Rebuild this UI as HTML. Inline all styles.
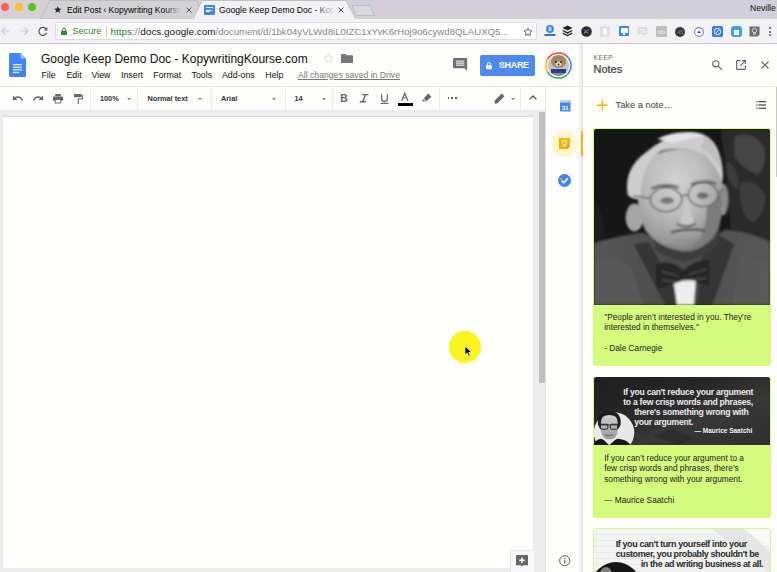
<!DOCTYPE html>
<html><head><meta charset="utf-8">
<style>
*{box-sizing:border-box;margin:0;padding:0}
html,body{width:777px;height:572px;overflow:hidden;background:#fdfdfc;font-family:"Liberation Sans",sans-serif;color:#222}
.a{position:absolute}
.t{position:absolute;white-space:nowrap;line-height:1}
svg{position:absolute;overflow:visible}
</style></head><body>

<!-- ===== TAB BAR ===== -->
<div class="a" style="left:0;top:0;width:777px;height:19px;background:linear-gradient(90deg,#d8cfd3 0%,#d3cfd8 40%,#d2d0da 100%)"></div>
<div class="a" style="left:1.2px;top:3.3px;width:8px;height:8px;border-radius:50%;background:#f6625b"></div>
<div class="a" style="left:14.8px;top:3.3px;width:8px;height:8px;border-radius:50%;background:#f8c12d"></div>
<div class="a" style="left:28.2px;top:3.3px;width:8px;height:8px;border-radius:50%;background:#50c725"></div>
<!-- tab 1 -->
<svg style="left:0;top:0" width="777" height="19"><polygon points="40.5,19 50,0.5 197,0.5 203,19" fill="#d2d2d4" stroke="#b8b8bc" stroke-width="0.8"/></svg>
<svg style="left:53.5px;top:6.2px" width="7.5" height="7.2" viewBox="0 0 24 23"><path d="M12 0.5l3.4 7.4 8.1.8-6.1 5.4 1.8 7.9L12 17.9l-7.2 4.1 1.8-7.9L0.5 8.7l8.1-.8z" fill="#2a2a2a"/></svg>
<div class="t" style="left:67px;top:6px;font-size:8.5px;color:#000;width:114px;overflow:hidden">Edit Post ‹ Kopywriting Kourse</div>
<div class="a" style="left:164px;top:3px;width:17px;height:14px;background:linear-gradient(90deg,rgba(210,210,212,0),#d2d2d4)"></div>
<svg style="left:186px;top:7px" width="6" height="6" viewBox="0 0 6 6"><path d="M0.5 0.5L5.5 5.5M5.5 0.5L0.5 5.5" stroke="#555" stroke-width="1"/></svg>
<!-- tab 2 -->
<svg style="left:0;top:0" width="777" height="20"><polygon points="193,19.5 202,0.5 346,0.5 356,19.5" fill="#f2f2f4" stroke="#b8b8bc" stroke-width="0.8"/><rect x="192" y="18.6" width="166" height="2" fill="#f2f2f4"/></svg>
<div class="a" style="left:204px;top:4.5px;width:11px;height:10px;background:#4285f4;border-radius:1px"></div>
<div class="a" style="left:206.3px;top:7px;width:6.5px;height:1.3px;background:#fff"></div>
<div class="a" style="left:206.3px;top:10.3px;width:3.8px;height:1.3px;background:#fff"></div>
<div class="a" style="left:210.1px;top:10.3px;width:2.7px;height:0.8px;background:#b8d0f8"></div>
<div class="t" style="left:219px;top:6px;font-size:8.6px;color:#000;width:116px;overflow:hidden">Google Keep Demo Doc - Kopy</div>
<div class="a" style="left:314px;top:3px;width:21px;height:14px;background:linear-gradient(90deg,rgba(242,242,244,0),#f2f2f4)"></div>
<svg style="left:338px;top:7px" width="6" height="6" viewBox="0 0 6 6"><path d="M0.5 0.5L5.5 5.5M5.5 0.5L0.5 5.5" stroke="#555" stroke-width="1"/></svg>
<!-- new tab -->
<svg style="left:0;top:0" width="777" height="19"><polygon points="352,5.5 370,5.5 374.5,15.5 356.5,15.5" fill="#d9d9dc" stroke="#b5b5b8" stroke-width="0.7"/></svg>
<div class="t" style="left:750px;top:4px;font-size:8.6px;color:#111">Neville</div>

<!-- ===== TOOLBAR ===== -->
<div class="a" style="left:0;top:19px;width:777px;height:24.5px;background:#f2f2f4;border-bottom:1px solid #c2c2c4"></div>
<svg style="left:1px;top:27px" width="9" height="8" viewBox="0 0 9 8"><path d="M8.5 4H1M4.5 0.5L1 4l3.5 3.5" stroke="#c9c9cb" stroke-width="1.1" fill="none"/></svg>
<svg style="left:20px;top:27px" width="9" height="8" viewBox="0 0 9 8"><path d="M0.5 4H8M4.5 0.5L8 4 4.5 7.5" stroke="#c9c9cb" stroke-width="1.1" fill="none"/></svg>
<svg style="left:38px;top:27px" width="10" height="9" viewBox="0 0 10 9"><path d="M8.3 2.2A4 4 0 1 0 8.6 6" stroke="#4a4a4a" stroke-width="1.1" fill="none"/><path d="M9.3 0.3v3.3H6z" fill="#4a4a4a"/></svg>
<div class="a" style="left:55px;top:22px;width:482px;height:18px;background:#fff;border:1px solid #dcdcde;border-radius:2px"></div>
<svg style="left:61px;top:28px" width="6" height="7" viewBox="0 0 6 7"><rect x="0" y="3" width="6" height="4" rx="0.5" fill="#2f8f2f"/><path d="M1.3 3.2V2a1.7 1.7 0 0 1 3.4 0v1.2" stroke="#2f8f2f" stroke-width="1" fill="none"/></svg>
<div class="t" style="left:72.5px;top:27px;font-size:9.1px;color:#2f7f31">Secure</div>
<div class="a" style="left:106px;top:26px;width:1px;height:11px;background:#c8c8c8"></div>
<div class="t" style="left:110.5px;top:26.5px;font-size:9.95px;color:#2f7f31">https:<span style="color:#888">//</span><span style="color:#111">docs.google.com</span><span style="color:#858585;font-size:9.65px">/document/d/1bk04yVLWd8iL0IZC1xYvK6rHoj9o6cywd8QLAUXQ5...</span></div>
<svg style="left:523px;top:26.5px" width="10" height="10" viewBox="0 0 24 24"><path d="M12 2.5l2.8 6.3 6.9.6-5.2 4.6 1.6 6.8L12 17.2l-6.1 3.6 1.6-6.8-5.2-4.6 6.9-.6z" stroke="#555" stroke-width="2" fill="none"/></svg>

<!-- extension icons -->
<svg style="left:544px;top:24px" width="12" height="14" viewBox="0 0 12 14"><circle cx="6" cy="5" r="4" fill="#3d8ee8"/><text x="6" y="7" font-size="5" fill="#fff" text-anchor="middle" font-family="Liberation Sans" font-weight="bold">8</text><rect x="0.5" y="10" width="11" height="2" fill="#3d6cc8"/></svg>
<svg style="left:562px;top:25px" width="11" height="12" viewBox="0 0 11 12"><path d="M5.5 0.5L10.5 3 5.5 5.5 0.5 3z" fill="#222"/><path d="M0.8 5.5l4.7 2.4 4.7-2.4" stroke="#222" stroke-width="1.3" fill="none"/><path d="M0.8 8.2l4.7 2.4 4.7-2.4" stroke="#222" stroke-width="1.3" fill="none"/></svg>
<svg style="left:581px;top:26px" width="11" height="11" viewBox="0 0 11 11"><circle cx="5.5" cy="5.5" r="5.3" fill="#2b2b2b"/><path d="M3 7.5Q5 3 8 3.5" stroke="#e05050" stroke-width="1" fill="none"/><path d="M3.5 7Q6 5 7.5 7" stroke="#40c060" stroke-width="1" fill="none"/><path d="M3 4.5L7 6.5" stroke="#4090ff" stroke-width="0.8"/></svg>
<div class="a" style="left:600px;top:26px;width:10px;height:11px;background:#e2e2e2;border-radius:1px"></div>
<svg style="left:602px;top:27px" width="6" height="9" viewBox="0 0 6 9"><path d="M0.5 1.5L3 0.5 5.5 1.5V8.5H0.5z" fill="#fafafa" stroke="#d0d0d0" stroke-width="0.6"/></svg>
<div class="a" style="left:619px;top:26px;width:10px;height:10px;background:#3f86e8;border-radius:1px"></div>
<div class="a" style="left:620.5px;top:28px;width:7px;height:5px;background:#f4f8ff"></div>
<div class="a" style="left:623px;top:33px;width:2px;height:2px;background:#f4f8ff"></div>
<svg style="left:637px;top:26px" width="11" height="11" viewBox="0 0 11 11"><rect x="0.5" y="1" width="10" height="7" rx="1" fill="#dcdcdc"/><path d="M6 8l2 2.5V8" fill="#dcdcdc"/><text x="5.5" y="6.5" font-size="4.5" fill="#f6f6f6" text-anchor="middle" font-family="Liberation Sans" font-weight="bold">CG</text></svg>
<div class="a" style="left:656px;top:26px;width:10.5px;height:11px;background:#bdbdbd;border-radius:1px"></div>
<div class="t" style="left:657px;top:28.5px;font-size:6px;color:#f4f4f4;font-weight:bold">&lt;/&gt;</div>
<svg style="left:675px;top:26.5px" width="10" height="10" viewBox="0 0 10 10"><circle cx="5" cy="5" r="5" fill="#1f3f4a"/><text x="5" y="7" font-size="5.5" fill="#f05a28" text-anchor="middle" font-family="Liberation Sans">45</text></svg>
<svg style="left:694px;top:26.5px" width="10" height="10" viewBox="0 0 10 10"><circle cx="5" cy="5" r="4.4" fill="#fff" stroke="#9b6ff0" stroke-width="1.1"/><path d="M3.5 6L5 3.6 6.5 6z" fill="#333"/></svg>
<div class="a" style="left:712px;top:26px;width:10.5px;height:11px;background:#3a7de0;border-radius:1.5px"></div>
<svg style="left:713px;top:27px" width="9" height="9" viewBox="0 0 9 9"><circle cx="4.5" cy="4.5" r="3.2" stroke="#fff" stroke-width="0.9" fill="none"/><path d="M3 6L6.5 2.5" stroke="#fff" stroke-width="0.9"/></svg>
<div class="a" style="left:731px;top:26px;width:10.5px;height:11px;background:#3fa0ee;border-radius:3px"></div>
<div class="a" style="left:733.5px;top:30px;width:5px;height:5px;background:#fff"></div>
<svg style="left:749px;top:26px" width="11" height="11" viewBox="0 0 11 11"><path d="M0.5 0.5H10.5V8.5L8.5 10.5H0.5z" fill="#6d6d6d"/><circle cx="5.5" cy="4.5" r="2.2" fill="none" stroke="#eee" stroke-width="0.8"/><path d="M4.6 6.5v1.8h1.8V6.5" stroke="#eee" stroke-width="0.8" fill="none"/></svg>
<div class="a" style="left:769px;top:27px;width:2px;height:2px;border-radius:50%;background:#555"></div>
<div class="a" style="left:769px;top:30.5px;width:2px;height:2px;border-radius:50%;background:#555"></div>
<div class="a" style="left:769px;top:34px;width:2px;height:2px;border-radius:50%;background:#555"></div>

<!-- ===== DOCS HEADER ===== -->
<div class="a" style="left:0;top:44px;width:582px;height:42px;background:#fdfdfc"></div>
<svg style="left:9px;top:53px" width="17" height="24" viewBox="0 0 17 24"><path d="M1.5 0H11.5L17 5.5V22.5A1.5 1.5 0 0 1 15.5 24H1.5A1.5 1.5 0 0 1 0 22.5V1.5A1.5 1.5 0 0 1 1.5 0z" fill="#4285f4"/><path d="M11.5 0V5.5H17z" fill="#a1c2fa"/><rect x="4" y="11" width="9" height="1.2" fill="#f1f1f1"/><rect x="4" y="13.6" width="9" height="1.2" fill="#f1f1f1"/><rect x="4" y="16.2" width="9" height="1.2" fill="#f1f1f1"/><rect x="4" y="18.8" width="6" height="1.2" fill="#f1f1f1"/></svg>
<div class="t" style="left:41px;top:52.5px;font-size:12px;color:#111">Google Keep Demo Doc - KopywritingKourse.com</div>
<svg style="left:323px;top:53px" width="11" height="10" viewBox="0 0 24 22"><path d="M12 1.5l3 6.6 7.2.7-5.4 4.9 1.6 7.1L12 17.1l-6.4 3.7 1.6-7.1-5.4-4.9 7.2-.7z" stroke="#d6d6d6" stroke-width="1.6" fill="none"/></svg>
<svg style="left:341px;top:54px" width="12" height="9" viewBox="0 0 12 9"><path d="M0 0.8A0.8 0.8 0 0 1 0.8 0H4.5L5.5 1.2H11.2A0.8 0.8 0 0 1 12 2V8.2A0.8 0.8 0 0 1 11.2 9H0.8A0.8 0.8 0 0 1 0 8.2z" fill="#777"/></svg>
<div class="t" style="left:41.5px;top:70.5px;font-size:8.8px;color:#111;word-spacing:0">File</div>
<div class="t" style="left:66.5px;top:70.5px;font-size:8.8px;color:#111">Edit</div>
<div class="t" style="left:91.5px;top:70.5px;font-size:8.8px;color:#111">View</div>
<div class="t" style="left:121px;top:70.5px;font-size:8.8px;color:#111">Insert</div>
<div class="t" style="left:153.3px;top:70.5px;font-size:8.8px;color:#111">Format</div>
<div class="t" style="left:191.5px;top:70.5px;font-size:8.8px;color:#111">Tools</div>
<div class="t" style="left:222px;top:70.5px;font-size:8.8px;color:#111">Add-ons</div>
<div class="t" style="left:265.3px;top:70.5px;font-size:8.8px;color:#111">Help</div>
<div class="t" style="left:298px;top:70.5px;font-size:8.66px;color:#777;text-decoration:underline">All changes saved in Drive</div>
<svg style="left:452.8px;top:58.4px" width="14.2" height="13.2" viewBox="0 0 15 14"><path d="M1.3 0H13.7A1.3 1.3 0 0 1 15 1.3V13.5L12.2 10.8H1.3A1.3 1.3 0 0 1 0 9.5V1.3A1.3 1.3 0 0 1 1.3 0z" fill="#6e6e6e"/><rect x="3" y="2.8" width="9" height="1.1" fill="#fff"/><rect x="3" y="4.9" width="9" height="1.1" fill="#fff"/><rect x="3" y="7" width="9" height="1.1" fill="#fff"/></svg>
<div class="a" style="left:479.5px;top:54.5px;width:55px;height:21.5px;background:#4d8af0;border-radius:2px"></div>
<svg style="left:486.3px;top:61.6px" width="6" height="7.2" viewBox="0 0 7 9"><rect x="0" y="3.8" width="7" height="5.2" rx="0.6" fill="#fff"/><path d="M1.6 4V2.4a1.9 1.9 0 0 1 3.8 0V4" stroke="#fff" stroke-width="1.1" fill="none"/><rect x="3" y="5.6" width="1" height="1.6" fill="#4d8af0"/></svg>
<div class="t" style="left:498.8px;top:61px;font-size:9px;color:#fff;font-weight:bold;letter-spacing:-0.3px">SHARE</div>
<svg style="left:545px;top:51.5px" width="27" height="27" viewBox="0 0 27 27"><path d="M2.59 7.20A12.6 12.6 0 0 1 23.15 5.40" stroke="#ea4335" stroke-width="1.5" fill="none"/><path d="M23.15 5.40A12.6 12.6 0 0 1 22.41 22.41" stroke="#4285f4" stroke-width="1.5" fill="none"/><path d="M22.41 22.41A12.6 12.6 0 0 1 2.59 19.80" stroke="#34a853" stroke-width="1.5" fill="none"/><path d="M2.59 19.80A12.6 12.6 0 0 1 2.59 7.20" stroke="#fbbc05" stroke-width="1.5" fill="none"/>
<defs><filter id="bl3"><feGaussianBlur stdDeviation="0.6"/></filter><clipPath id="avc"><circle cx="13.5" cy="13.5" r="10.6"/></clipPath></defs>
<circle cx="13.5" cy="13.5" r="10.6" fill="#c4c4c4"/>
<g clip-path="url(#avc)" filter="url(#bl3)">
<ellipse cx="13.5" cy="9.5" rx="7.5" ry="6.5" fill="#a88560"/>
<ellipse cx="13.5" cy="12" rx="3" ry="2.5" fill="#e2d8c8"/>
<circle cx="11" cy="10" r="0.9" fill="#222"/><circle cx="16" cy="10" r="0.9" fill="#222"/>
<circle cx="13.5" cy="12.5" r="0.9" fill="#222"/>
<path d="M6 17H21V21H6z" fill="#2a3c90"/>
<path d="M4 21H23V25H4z" fill="#8a8a8a"/>
</g>
</svg>

<!-- header bottom border -->
<div class="a" style="left:0;top:86px;width:582px;height:1px;background:#e6e6e6"></div>

<!-- ===== DOCS TOOLBAR ===== -->
<div class="a" style="left:0;top:87px;width:545px;height:23px;background:#fdfdfc"></div>
<svg style="left:13px;top:95px" width="10" height="6" viewBox="0 0 10 6"><path d="M9.5 5.5A4.8 4.8 0 0 0 2 3" stroke="#666" stroke-width="1.4" fill="none"/><path d="M0 0.5V5H4.5z" fill="#666"/></svg>
<svg style="left:33px;top:95px" width="10" height="6" viewBox="0 0 10 6"><path d="M0.5 5.5A4.8 4.8 0 0 1 8 3" stroke="#666" stroke-width="1.4" fill="none"/><path d="M10 0.5V5H5.5z" fill="#666"/></svg>
<svg style="left:53px;top:93.5px" width="10" height="9" viewBox="0 0 10 9"><rect x="2.2" y="0" width="5.6" height="2.2" fill="#666"/><rect x="0" y="2.6" width="10" height="4.2" rx="0.7" fill="#666"/><rect x="2.2" y="5.5" width="5.6" height="3.5" fill="#fff" stroke="#666" stroke-width="0.9"/></svg>
<svg style="left:74px;top:93.5px" width="9" height="10" viewBox="0 0 9 10"><rect x="0" y="0" width="7.5" height="3.2" fill="#666"/><path d="M7.5 1.6H8.5V5H4.3V10" stroke="#666" stroke-width="1.1" fill="none"/></svg>
<div class="a" style="left:90px;top:87px;width:1px;height:23px;background:#ececec"></div>
<div class="t" style="left:100px;top:95px;font-size:7.3px;color:#333;font-weight:bold">100%</div>
<svg style="left:127px;top:97.5px" width="4" height="3" viewBox="0 0 4 3"><path d="M0 0H4L2 2.2z" fill="#888"/></svg>
<div class="a" style="left:136.5px;top:87px;width:1px;height:23px;background:#ececec"></div>
<div class="t" style="left:147.5px;top:95px;font-size:7.3px;color:#333;font-weight:bold">Normal text</div>
<svg style="left:197.5px;top:97.5px" width="4" height="3" viewBox="0 0 4 3"><path d="M0 0H4L2 2.2z" fill="#888"/></svg>
<div class="a" style="left:210.5px;top:87px;width:1px;height:23px;background:#ececec"></div>
<div class="t" style="left:221px;top:95px;font-size:7.3px;color:#333;font-weight:bold">Arial</div>
<svg style="left:271.5px;top:97.5px" width="4" height="3" viewBox="0 0 4 3"><path d="M0 0H4L2 2.2z" fill="#888"/></svg>
<div class="a" style="left:284.5px;top:87px;width:1px;height:23px;background:#ececec"></div>
<div class="t" style="left:294.5px;top:95px;font-size:7.3px;color:#333;font-weight:bold">14</div>
<svg style="left:321.5px;top:97.5px" width="4" height="3" viewBox="0 0 4 3"><path d="M0 0H4L2 2.2z" fill="#888"/></svg>
<div class="a" style="left:331.5px;top:87px;width:1px;height:23px;background:#ececec"></div>
<div class="t" style="left:340.2px;top:93.6px;font-size:10.3px;color:#666;font-weight:bold">B</div>
<svg style="left:359px;top:93px" width="10" height="10" viewBox="0 0 10 10"><path d="M3.2 1.6H9.4M0.8 8.7H6.8M6.6 1.6L3.6 8.7" stroke="#666" stroke-width="1.4" fill="none"/></svg>
<svg style="left:380px;top:94px" width="9" height="11" viewBox="0 0 9 11"><path d="M1.6 0.3V4.6A2.9 2.9 0 0 0 7.4 4.6V0.3" stroke="#6a6a6a" stroke-width="1.3" fill="none"/><rect x="0.5" y="8.8" width="8" height="1.2" fill="#666"/></svg>
<svg style="left:401.3px;top:93px" width="7.5" height="8" viewBox="0 0 7.5 8"><path d="M0.6 7.8L3.75 0.4 6.9 7.8M1.9 5H5.6" stroke="#666" stroke-width="1.2" fill="none"/></svg>
<div class="a" style="left:397.5px;top:103px;width:15px;height:2.6px;background:#000"></div>
<svg style="left:421.5px;top:92.5px" width="10" height="9" viewBox="0 0 10 9"><path d="M6.2 0.6L9.4 3.8 4.5 8.2 1.8 5.5z" fill="#666"/><path d="M1.5 6L0 8.6 3.6 8.4z" fill="#666"/></svg>
<div class="a" style="left:439px;top:87px;width:1px;height:23px;background:#ececec"></div>
<div class="a" style="left:447.5px;top:97.3px;width:1.7px;height:1.7px;background:#666"></div>
<div class="a" style="left:451.2px;top:97.3px;width:1.7px;height:1.7px;background:#666"></div>
<div class="a" style="left:454.9px;top:97.3px;width:1.7px;height:1.7px;background:#666"></div>
<svg style="left:494px;top:92.5px" width="11" height="11" viewBox="0 0 11 11"><path d="M7.8 0.6L10.4 3.2 3.2 10.4H0.6V7.8z" fill="#666"/></svg>
<svg style="left:510.5px;top:97.5px" width="4" height="3" viewBox="0 0 4 3"><path d="M0 0H4L2 2.2z" fill="#888"/></svg>
<div class="a" style="left:520px;top:87px;width:1px;height:23px;background:#ececec"></div>
<svg style="left:528.5px;top:95px" width="8" height="5" viewBox="0 0 8 5"><path d="M0.6 4.4L4 1 7.4 4.4" stroke="#555" stroke-width="1.3" fill="none"/></svg>

<!-- ===== DOC AREA ===== -->
<div class="a" style="left:0;top:110px;width:545px;height:462px;background:#ededed"></div>
<div class="a" style="left:2.7px;top:116.8px;width:530.6px;height:451.2px;background:#fefefc;box-shadow:0 -0.6px 1px #c4c4c4, -0.3px 0 0.6px #d0d0d0"></div>
<div class="a" style="left:538.8px;top:112px;width:6px;height:271px;background:#c0c0c0"></div>
<!-- cursor highlight -->
<div class="a" style="left:449.2px;top:330.9px;width:31.8px;height:31.8px;border-radius:50%;background:#fcf41f"></div>
<svg style="left:463.6px;top:344.8px" width="8.5" height="12.3" viewBox="0 0 9 13"><path d="M1 1V10.5L3.4 8.4 5 12 6.6 11.3 5 7.8H8.2z" fill="#111" stroke="#fff" stroke-width="0.7"/></svg>
<!-- comment button -->
<div class="a" style="left:509.5px;top:549.5px;width:24px;height:23px;background:#f8f8fa;border:1px solid #e6e6e8;border-right:none;border-bottom:none"></div>
<svg style="left:516px;top:555px" width="12" height="12" viewBox="0 0 12 12"><path d="M0.8 0H11.2A0.8 0.8 0 0 1 12 0.8V10.2H7L6 11.5 5 10.2H0A0 0 0 0 1 0 10.2V0.8A0.8 0.8 0 0 1 0.8 0z" fill="#666"/><path d="M6 2.5V8M3.2 5.2H8.8" stroke="#fff" stroke-width="1.6"/></svg>

<!-- ===== SIDE STRIP ===== -->
<div class="a" style="left:545px;top:87px;width:1px;height:485px;background:#e3e3e3"></div>
<div class="a" style="left:546px;top:87px;width:36px;height:485px;background:#fdfdfc"></div>
<svg style="left:559.5px;top:100px" width="10.5" height="11.5" viewBox="0 0 10.5 11.5"><rect x="0" y="0" width="10.5" height="11.5" rx="0.8" fill="#4285f4"/><rect x="0" y="0" width="10.5" height="2.5" fill="#c9d3e3"/><text x="5.25" y="9.8" font-size="6.2" fill="#fff" text-anchor="middle" font-family="Liberation Sans" font-weight="bold">31</text></svg>
<div class="a" style="left:551px;top:130px;width:26.5px;height:26.5px;border-radius:50%;background:#fef6d1"></div>
<svg style="left:559px;top:137.5px" width="11" height="11" viewBox="0 0 11 11"><path d="M0 0H11V8L8 11H0z" fill="#f5b400"/><path d="M8 11V8H11z" fill="#c99400"/><circle cx="5.5" cy="4.4" r="2.2" fill="none" stroke="#fff" stroke-width="0.9"/><path d="M4.6 6.4v1.6h1.8V6.4" stroke="#fff" stroke-width="0.9" fill="none"/></svg>
<div class="a" style="left:580.6px;top:130.5px;width:2.2px;height:25.5px;background:#f5b400;z-index:5"></div>
<svg style="left:558px;top:173.5px" width="13" height="13" viewBox="0 0 13 13"><circle cx="6.5" cy="6.5" r="6.5" fill="#4285f4"/><path d="M3.6 6.8L5.6 8.8 9.6 4.4" stroke="#fff" stroke-width="1.6" fill="none"/><circle cx="3.2" cy="5" r="0.9" fill="#fbbc05"/></svg>
<svg style="left:558.5px;top:554.5px" width="11.5" height="11.5" viewBox="0 0 12 12"><circle cx="6" cy="6" r="5.3" stroke="#555" stroke-width="1" fill="none"/><rect x="5.45" y="5" width="1.1" height="4" fill="#555"/><rect x="5.45" y="3" width="1.1" height="1.1" fill="#555"/></svg>

<!-- ===== KEEP PANEL ===== -->
<div class="a" style="left:579px;top:44px;width:4px;height:528px;background:linear-gradient(90deg,#f6f6f9,#ececee 60%,#dcdcdc)"></div>
<div class="a" style="left:583px;top:44px;width:194px;height:528px;background:#fdfdfb"></div>
<div class="t" style="left:593.5px;top:55px;font-size:6.6px;color:#666;letter-spacing:0.55px">KEEP</div>
<div class="t" style="left:593.5px;top:63.8px;font-size:11px;color:#3c4043;-webkit-text-stroke:0.2px #3c4043">Notes</div>
<svg style="left:711.5px;top:60px" width="10.5" height="10" viewBox="0 0 10.5 10"><circle cx="3.8" cy="3.8" r="3.1" stroke="#5f6368" stroke-width="1.1" fill="none"/><path d="M6.1 6.1L9.8 9.6" stroke="#5f6368" stroke-width="1.3"/></svg>
<svg style="left:736px;top:60px" width="10" height="10" viewBox="0 0 10 10"><path d="M4.5 0.6H1.2A0.6 0.6 0 0 0 0.6 1.2V8.8A0.6 0.6 0 0 0 1.2 9.4H8.8A0.6 0.6 0 0 0 9.4 8.8V5.5" stroke="#5f6368" stroke-width="1.1" fill="none"/><path d="M6 0.6H9.4V4M9.4 0.6L4.2 5.8" stroke="#5f6368" stroke-width="1.1" fill="none"/></svg>
<svg style="left:761px;top:61px" width="8" height="8" viewBox="0 0 8 8"><path d="M0.5 0.5L7.5 7.5M7.5 0.5L0.5 7.5" stroke="#5f6368" stroke-width="1.1"/></svg>
<div class="a" style="left:583px;top:86px;width:194px;height:1px;background:#ececec"></div>
<svg style="left:596.5px;top:99.5px" width="10.5" height="10.5" viewBox="0 0 10 10"><path d="M5 0V10M0 5H10" stroke="#f5b400" stroke-width="1.3"/></svg>
<div class="t" style="left:615.5px;top:101px;font-size:9.3px;color:#444">Take a note…</div>
<svg style="left:756px;top:100.5px" width="10" height="8" viewBox="0 0 10 8"><path d="M2.5 0.7H10M2.5 4H10M2.5 7.3H10" stroke="#222" stroke-width="1.1"/><circle cx="0.9" cy="0.7" r="0.7" fill="#555"/><circle cx="0.9" cy="4" r="0.7" fill="#555"/><circle cx="0.9" cy="7.3" r="0.7" fill="#555"/></svg>
<div class="a" style="left:775.5px;top:87px;width:1.5px;height:90px;background:#c8c8c8"></div>

<!-- card 1 -->
<div class="a" style="left:593.2px;top:128px;width:177.8px;height:237.5px;border-radius:3px;background:#d4fa7e;overflow:hidden">
<svg style="left:1px;top:0.8px;border-radius:2px 2px 0 0;overflow:hidden" width="175.8" height="176" viewBox="0 0 178 177" preserveAspectRatio="none">
<defs>
<filter id="bl" x="-5%" y="-5%" width="110%" height="110%"><feGaussianBlur stdDeviation="1"/></filter>
<radialGradient id="face" cx="0.45" cy="0.3" r="0.75"><stop offset="0" stop-color="#d2d2d2"/><stop offset="0.45" stop-color="#bcbcbc"/><stop offset="0.8" stop-color="#9a9a9a"/><stop offset="1" stop-color="#707070"/></radialGradient>
<linearGradient id="suit" x1="0" y1="0" x2="1" y2="0"><stop offset="0" stop-color="#555"/><stop offset="0.5" stop-color="#4c4c4c"/><stop offset="1" stop-color="#585858"/></linearGradient>
</defs>
<rect width="178" height="177" fill="#161616"/>
<g filter="url(#bl)">
<path d="M128 0H178V118Q160 108 138 100Q136 50 128 0z" fill="#2a2a2a"/>
<path d="M142 8Q160 0 172 18Q176 36 166 46Q152 42 142 28z" fill="#454545"/>
<path d="M148 55Q164 48 174 68Q172 88 160 94Q146 84 148 55z" fill="#3e3e3e"/>
<path d="M134 32Q148 40 146 62Q138 56 134 46z" fill="#3a3a3a"/>
<path d="M0 70Q14 90 10 118H0z" fill="#1e1e1e"/>
<!-- suit -->
<path d="M0 115Q20 108 50 104L92 128 133 101Q160 104 178 114V177H0z" fill="url(#suit)"/>
<path d="M0 130Q20 125 38 140L50 177H0z" fill="#5e5e5e" opacity="0.6"/>
<path d="M150 125Q170 130 178 140V177H140z" fill="#5c5c5c" opacity="0.6"/>
<path d="M40 116L56 114 90 177H72z" fill="#353535"/>
<path d="M126 106L110 122 104 177H120L142 116z" fill="#363636"/>
<!-- neck shadow -->
<path d="M58 98Q92 140 128 94L126 116Q96 146 62 122z" fill="#3c3c3c"/>
<!-- bow tie -->
<path d="M63 136Q78 130 90 142Q104 130 117 132L117 158Q104 154 90 150Q78 158 63 160z" fill="#262626"/>
<path d="M68 143L86 148M96 146L114 141M68 152L86 154M96 152L114 150" stroke="#555" stroke-width="1.1"/>
<!-- shirt -->
<path d="M81 156Q92 150 103 153L101 177H84z" fill="#ededed"/>
<!-- ears -->
<ellipse cx="41" cy="89" rx="9" ry="14" fill="#a6a6a6"/>
<ellipse cx="131" cy="71" rx="5" ry="16" fill="#8c8c8c"/>
<!-- head -->
<path d="M44 60Q44 22 86 20Q126 20 130 55Q133 92 120 110Q104 124 92 123Q66 120 52 102Q44 86 44 60z" fill="url(#face)"/>
<path d="M114 80Q128 70 130 58Q131 95 118 112Q106 123 96 122Q114 108 114 80z" fill="#7c7c7c"/>
<!-- hair -->
<path d="M34 66Q30 40 52 24Q70 8 95 3Q118 2 126 22Q132 38 130 54Q124 36 112 26Q92 16 68 22Q54 30 50 48Q47 58 47 70Q40 72 34 66z" fill="#cdcdcd"/>
<path d="M64 10Q86 -1 112 6Q96 10 80 14z" fill="#e4e4e4"/>
<path d="M113 8Q127 18 129 42Q121 26 108 19z" fill="#bebebe"/>
<!-- brows -->
<path d="M58 60Q72 54 86 59" stroke="#666" stroke-width="2.6" fill="none"/>
<path d="M98 56Q112 50 124 55" stroke="#666" stroke-width="2.6" fill="none"/>
<!-- eyes -->
<ellipse cx="74" cy="72" rx="7" ry="3.5" fill="#7a7a7a"/>
<ellipse cx="110" cy="67" rx="6" ry="3.5" fill="#6e6e6e"/>
<!-- glasses -->
<ellipse cx="73" cy="71" rx="16" ry="12" fill="none" stroke="#555" stroke-width="1.2"/>
<ellipse cx="110.5" cy="66" rx="15" ry="12" fill="none" stroke="#555" stroke-width="1.2"/>
<path d="M89 68Q92 65 95.5 67M57 70L40 67M125.5 64L131 61" stroke="#555" stroke-width="1.2" fill="none"/>
<!-- nose -->
<path d="M92 72Q90 86 86 94Q94 99 102 94Q98 86 96 72z" fill="#c8c8c8"/>
<path d="M84 95Q93 101 103 95" stroke="#5a5a5a" stroke-width="2" fill="none"/>
<!-- mouth -->
<path d="M78 104Q94 99 112 102" stroke="#4a4a4a" stroke-width="2.2" fill="none"/>
<path d="M80 111Q95 115 110 109" stroke="#909090" stroke-width="2" fill="none"/>
</g>
</svg>
<div class="t" style="left:11px;top:183.8px;font-size:8.3px;color:#222;line-height:10.5px">"People aren’t interested in you. They’re<br>interested in themselves."<br><br>- Dale Carnegie</div>
</div>

<!-- card 2 -->
<div class="a" style="left:593.2px;top:376.5px;width:177.8px;height:141px;border-radius:3px;background:#d4fa7e;overflow:hidden">
<div class="a" style="left:1px;top:0.8px;width:175.8px;height:68.2px;border-radius:2px 2px 0 0;background:linear-gradient(160deg,#1e1e1e 0%,#262626 35%,#383838 62%,#2e2e2e 100%)"></div>
<svg style="left:1px;top:0.8px;overflow:hidden" width="175.8" height="68.2" viewBox="0 0 178 69" preserveAspectRatio="none">
<defs><filter id="bl2"><feGaussianBlur stdDeviation="0.5"/></filter>
<linearGradient id="sf" x1="0" y1="0" x2="0" y2="1"><stop offset="0" stop-color="#d0d0d0"/><stop offset="1" stop-color="#989898"/></linearGradient></defs>
<path d="M95 69L120 48 150 55 178 40V69z" fill="#333" opacity="0.5"/>
<path d="M60 60L80 52 100 62 85 69z" fill="#2a2a2a" opacity="0.7"/>
<circle cx="20.3" cy="56.2" r="20.5" fill="#e8e8e8"/>
<g filter="url(#bl2)">
<path d="M4 48Q3 35 15.5 34.5Q28 35 27 48L25 52H6z" fill="#1c1c1c"/>
<path d="M7 46Q7 38.5 15.5 38.5Q24 38.5 24 46L24 55Q22.5 63.5 15.5 63.5Q8.5 63.5 7 55z" fill="url(#sf)"/>
<path d="M5 48.5H26" stroke="#2a2a2a" stroke-width="1"/>
<rect x="6.5" y="47.8" width="7.5" height="5" rx="1.2" stroke="#222" stroke-width="1" fill="none"/>
<rect x="16.5" y="47.8" width="7.5" height="5" rx="1.2" stroke="#222" stroke-width="1" fill="none"/>
<path d="M11.5 58.5Q15.5 60 19.5 58.5" stroke="#5a5a5a" stroke-width="1" fill="none"/>
<path d="M0 69Q1 63.5 7 62.5L15.5 66 24 62.5Q34 63.5 37 69z" fill="#161616"/>
<path d="M9 63L15.5 69 22 63z" fill="#e6e6e6"/>
</g>
</svg>
<div class="t" style="left:30px;top:10.2px;font-size:8.6px;color:#ececec;font-weight:bold;line-height:10px;letter-spacing:-0.25px">If you can't reduce your argument<br>to a few crisp words and phrases,<br><span style="padding-left:11px">there's something wrong with</span><br><span style="padding-left:11px">your argument.</span></div>
<div class="t" style="left:101.3px;top:51.3px;font-size:6.5px;color:#f2f2f2;font-weight:bold">— Maurice Saatchi</div>
<div class="t" style="left:11px;top:76.4px;font-size:8.3px;color:#222;line-height:10.5px">If you can’t reduce your argument to a<br>few crisp words and phrases, there’s<br>something wrong with your argument.<br><br>— Maurice Saatchi</div>
</div>

<!-- card 3 -->
<div class="a" style="left:593.2px;top:528.3px;width:177.8px;height:60px;border-radius:3px;background:repeating-linear-gradient(180deg,#f3f3f3 0,#f3f3f3 5px,#e9e9e9 5px,#e9e9e9 6px);border:1px solid #cdf79a;overflow:hidden">
<svg style="left:0;top:0" width="178" height="60" viewBox="0 0 178 60"><path d="M118 0H150L178 25V45z" fill="#e2e2e2" opacity="0.8"/><path d="M150 0H178V20z" fill="#fafafa"/><circle cx="22" cy="58" r="25" fill="#161616"/><ellipse cx="12" cy="48" rx="7" ry="10" fill="#9a9a9a" opacity="0.8"/></svg>
<div class="t" style="left:21.5px;top:9.5px;font-size:9px;color:#2a2a2a;font-weight:bold;line-height:10px;letter-spacing:-0.4px">If you can't turn yourself into your<br>customer, you probably shouldn't be<br><span style="padding-left:25px">in the ad writing business at all.</span></div>
</div>

</body></html>
